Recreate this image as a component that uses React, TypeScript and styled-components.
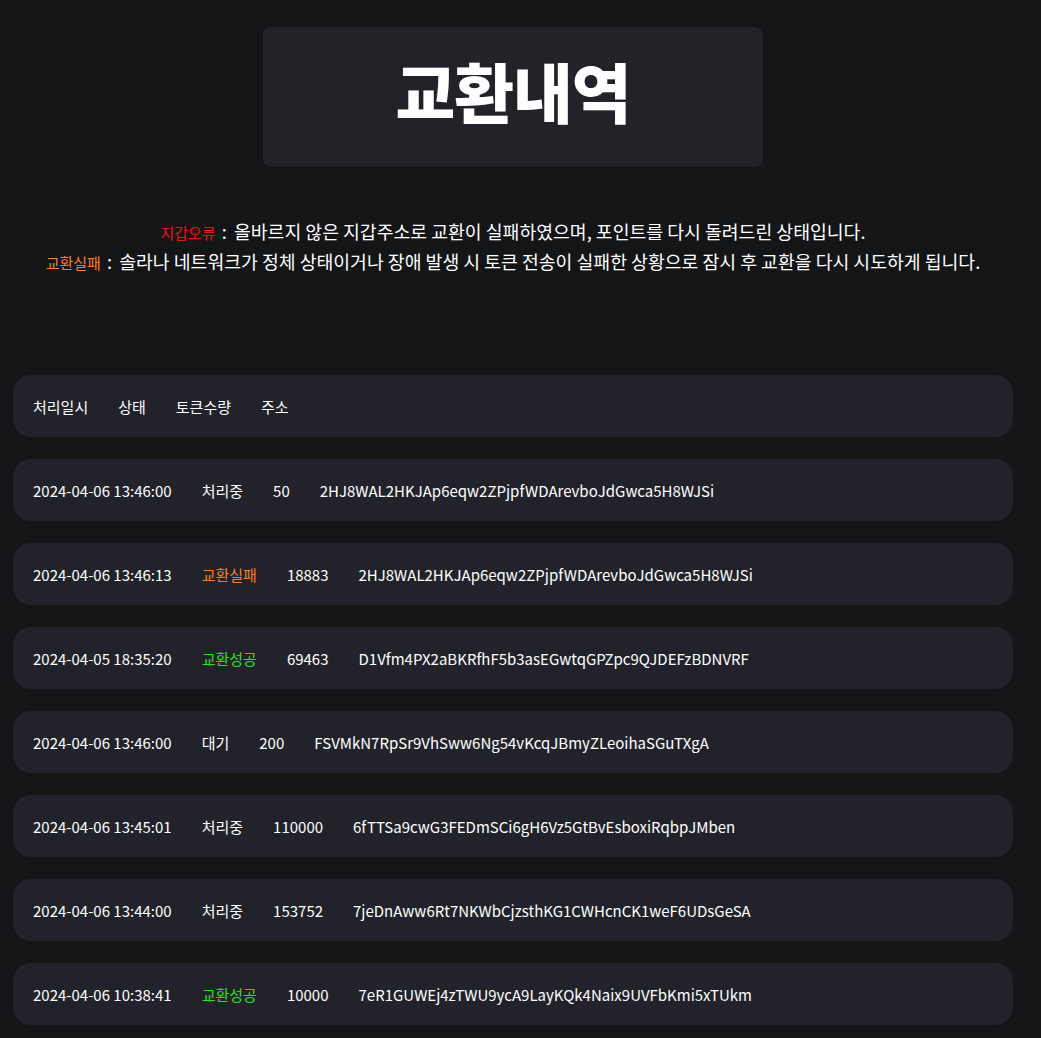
import React from 'react';
import styled, { createGlobalStyle } from 'styled-components';

type Status = 'processing' | 'failed' | 'success' | 'waiting';

interface ExchangeRow {
  date: string;
  status: Status;
  amount: string;
  address: string;
}

const STATUS_LABELS: Record<Status, string> = {
  processing: '처리중',
  failed: '교환실패',
  success: '교환성공',
  waiting: '대기',
};

const STATUS_COLORS: Record<Status, string> = {
  processing: '#ffffff',
  failed: '#ff7f0e',
  success: '#1ee61e',
  waiting: '#ffffff',
};

const ROWS: ExchangeRow[] = [
  { date: '2024-04-06 13:46:00', status: 'processing', amount: '50', address: '2HJ8WAL2HKJAp6eqw2ZPjpfWDArevboJdGwca5H8WJSi' },
  { date: '2024-04-06 13:46:13', status: 'failed', amount: '18883', address: '2HJ8WAL2HKJAp6eqw2ZPjpfWDArevboJdGwca5H8WJSi' },
  { date: '2024-04-05 18:35:20', status: 'success', amount: '69463', address: 'D1Vfm4PX2aBKRfhF5b3asEGwtqGPZpc9QJDEFzBDNVRF' },
  { date: '2024-04-06 13:46:00', status: 'waiting', amount: '200', address: 'FSVMkN7RpSr9VhSww6Ng54vKcqJBmyZLeoihaSGuTXgA' },
  { date: '2024-04-06 13:45:01', status: 'processing', amount: '110000', address: '6fTTSa9cwG3FEDmSCi6gH6Vz5GtBvEsboxiRqbpJMben' },
  { date: '2024-04-06 13:44:00', status: 'processing', amount: '153752', address: '7jeDnAww6Rt7NKWbCjzsthKG1CWHcnCK1weF6UDsGeSA' },
  { date: '2024-04-06 10:38:41', status: 'success', amount: '10000', address: '7eR1GUWEj4zTWU9ycA9LayKQk4Naix9UVFbKmi5xTUkm' },
];

const GlobalStyle = createGlobalStyle`
  html, body {
    margin: 0;
    padding: 0;
    background-color: #141517;
    color: #ffffff;
    font-family: "Noto Sans CJK KR", "Noto Sans", sans-serif;
  }
`;

const Page = styled.div`
  width: 1000px;
  padding: 27px 13px 40px;
  display: flex;
  flex-direction: column;
  align-items: center;
`;

const TitleBox = styled.div`
  width: 500px;
  height: 140px;
  box-sizing: border-box;
  padding-bottom: 14px;
  background-color: #222328;
  border-radius: 8px;
  display: flex;
  align-items: center;
  justify-content: center;
`;

const Title = styled.h1`
  margin: 0;
  font-size: 65px;
  font-weight: 900;
  letter-spacing: -1px;
  line-height: 1;
`;

const Notice = styled.div`
  margin-top: 50px;
  text-align: center;
  font-size: 18.3px;
  line-height: 28px;
`;

const NoticeLabel = styled.span<{ $color: string }>`
  color: ${p => p.$color};
  font-size: 15px;
`;

const Colon = styled.span`
  margin: 0 3px 0 2px;
`;

const List = styled.div`
  margin-top: 98px;
  width: 100%;
  display: flex;
  flex-direction: column;
  gap: 22px;
`;

const Row = styled.div`
  height: 62px;
  box-sizing: border-box;
  padding: 0 20px;
  background-color: #22232a;
  border-radius: 18px;
  display: flex;
  align-items: center;
  gap: 30px;
  font-size: 15px;
`;

const Cell = styled.span<{ $color?: string }>`
  color: ${p => p.$color || '#ffffff'};
  white-space: nowrap;
`;

const App: React.FC = () => {
  return (
    <>
      <GlobalStyle />
      <Page>
        <TitleBox>
          <Title>교환내역</Title>
        </TitleBox>

        <Notice>
          <div>
            <NoticeLabel $color="#ee1111">지갑오류</NoticeLabel>
            <Colon> :</Colon> 올바르지 않은 지갑주소로 교환이 실패하였으며, 포인트를 다시 돌려드린 상태입니다.
          </div>
          <div>
            <NoticeLabel $color="#ff7f0e">교환실패</NoticeLabel>
            <Colon> :</Colon> 솔라나 네트워크가 정체 상태이거나 장애 발생 시 토큰 전송이 실패한 상황으로 잠시 후 교환을 다시 시도하게 됩니다.
          </div>
        </Notice>

        <List>
          <Row>
            <Cell>처리일시</Cell>
            <Cell>상태</Cell>
            <Cell>토큰수량</Cell>
            <Cell>주소</Cell>
          </Row>
          {ROWS.map((row, i) => (
            <Row key={i}>
              <Cell>{row.date}</Cell>
              <Cell $color={STATUS_COLORS[row.status]}>{STATUS_LABELS[row.status]}</Cell>
              <Cell>{row.amount}</Cell>
              <Cell>{row.address}</Cell>
            </Row>
          ))}
        </List>
      </Page>
    </>
  );
};

export default App;
